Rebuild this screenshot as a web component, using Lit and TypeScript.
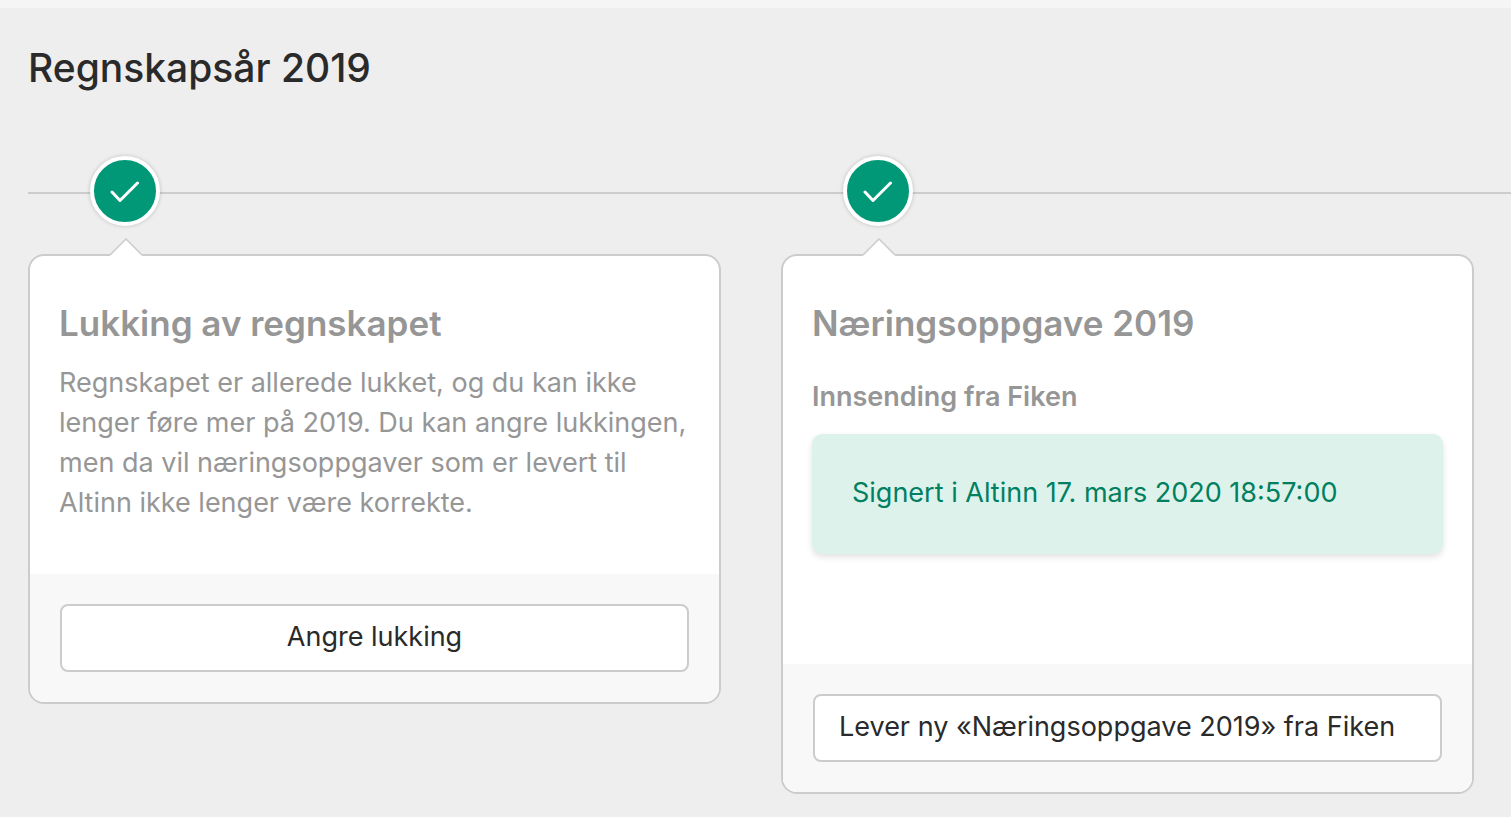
import { LitElement, html, css, svg } from "lit";
import { customElement, property } from "lit/decorators.js";

const check = svg`<path d="M2 13 L10 21.5 L27.5 4" fill="none" stroke="#fff" stroke-width="3" stroke-linecap="round" stroke-linejoin="round"/>`;

@customElement("timeline-step")
export class TimelineStep extends LitElement {
  @property() heading = "";

  static styles = css`
    :host {
      display: block;
      min-width: 0;
    }
    .badge {
      display: flex;
      align-items: center;
      justify-content: center;
      box-sizing: border-box;
      width: 70px;
      height: 70px;
      margin: 0 0 28px 62px;
      border: 4px solid #fff;
      border-radius: 50%;
      background: #009877;
      box-shadow: 0 0 4px rgba(0, 0, 0, 0.2);
    }
    .card {
      position: relative;
      border: 2px solid #ccc;
      border-radius: 16px;
      background: #fff;
    }
    .pointer {
      position: absolute;
      left: 79px;
      top: -18px;
      display: block;
    }
    .body {
      padding: 43px 29px 0;
      color: #969696;
    }
    .title {
      margin: 0;
      font-size: 35px;
      line-height: 48px;
      font-weight: 600;
    }
    .footer {
      padding: 30px;
      background: #f8f8f8;
      border-radius: 0 0 14px 14px;
    }
  `;

  render() {
    return html`
      <div class="badge">
        <svg width="30" height="24" viewBox="0 0 30 24" role="img" aria-label="Fullført">${check}</svg>
      </div>
      <article class="card">
        <svg class="pointer" width="34" height="18" viewBox="0 0 34 18" aria-hidden="true">
          <path d="M0.5 18 L17 1 L33.5 18 Z" fill="#fff" />
          <path d="M1 17 L17 1 L33 17" fill="none" stroke="#ccc" stroke-width="1.5" />
        </svg>
        <div class="body">
          <h2 class="title">${this.heading}</h2>
          <slot></slot>
        </div>
        <footer class="footer"><slot name="action"></slot></footer>
      </article>
    `;
  }
}

@customElement("app-root")
export class AppRoot extends LitElement {
  static styles = css`
    :host {
      display: block;
      box-sizing: border-box;
      min-height: 100vh;
      border-top: 8px solid #f5f5f5;
      background: #eee;
      color: #2a2a2a;
      font-family: Inter, "Liberation Sans", sans-serif;
      font-size: 27px;
      line-height: 40px;
    }
    .page {
      padding: 36px 0 23px 28px;
    }
    .year {
      margin: 0 0 64px;
      font-size: 39px;
      line-height: 48px;
      font-weight: 500;
    }
    .timeline {
      display: grid;
    }
    .rail {
      grid-area: 1 / 1;
      align-self: start;
      height: 2px;
      margin: 36px 0 0;
      border: 0;
      background: #ccc;
    }
    .steps {
      grid-area: 1 / 1;
      display: grid;
      grid-template-columns: repeat(2, minmax(0, 1fr));
      align-items: start;
      gap: 60px;
      padding-right: 37px;
    }
    .text {
      margin: 16px 0 0;
      padding-bottom: 51px;
    }
    .subtitle {
      margin: 30px 0 17px;
      font-size: 27px;
      line-height: 40px;
      font-weight: 600;
    }
    .notice {
      margin-bottom: 110px;
      padding: 39px 40px 41px;
      border-radius: 10px;
      background: #def2ec;
      color: #008060;
      box-shadow: 0 3px 6px rgba(0, 0, 0, 0.12);
    }
    .button {
      display: block;
      box-sizing: border-box;
      width: 100%;
      padding: 11px 24px 13px;
      border: 2px solid #ccc;
      border-radius: 8px;
      background: #fff;
      color: #2a2a2a;
      font: inherit;
      text-align: center;
      cursor: pointer;
    }
    .start {
      text-align: left;
    }
  `;

  render() {
    return html`
      <main class="page">
        <h1 class="year">Regnskapsår 2019</h1>
        <section class="timeline">
          <hr class="rail" />
          <div class="steps">
            <timeline-step heading="Lukking av regnskapet">
              <p class="text">
                Regnskapet er allerede lukket, og du kan ikke lenger føre mer på 2019. Du kan angre lukkingen, men da
                vil næringsoppgaver som er levert til Altinn ikke lenger være korrekte.
              </p>
              <button slot="action" class="button" type="button">Angre lukking</button>
            </timeline-step>
            <timeline-step heading="Næringsoppgave 2019">
              <h3 class="subtitle">Innsending fra Fiken</h3>
              <div class="notice">Signert i Altinn 17. mars 2020 18:57:00</div>
              <button slot="action" class="button start" type="button">Lever ny «Næringsoppgave 2019» fra Fiken</button>
            </timeline-step>
          </div>
        </section>
      </main>
    `;
  }
}
